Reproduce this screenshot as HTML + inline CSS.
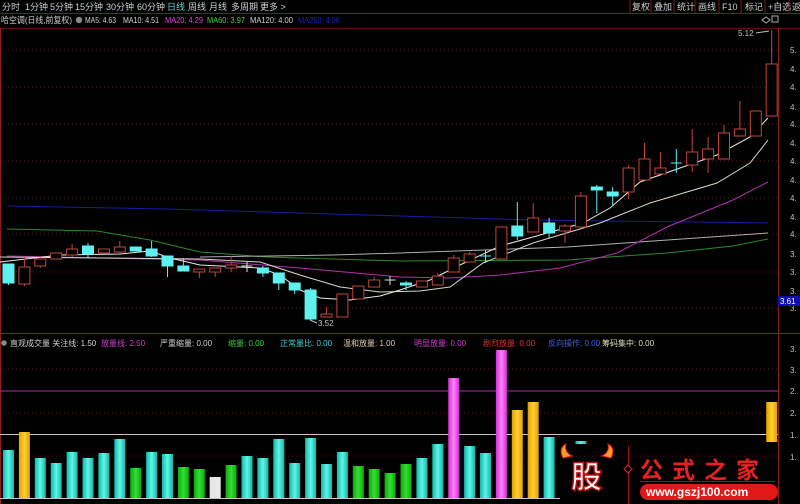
<!DOCTYPE html>
<html><head><meta charset="utf-8"><style>
html,body{margin:0;padding:0;background:#000;width:800px;height:504px;overflow:hidden}
svg{display:block}
text{font-family:"Liberation Sans","Noto Sans CJK SC",sans-serif}
</style></head><body>
<svg width="800" height="504" viewBox="0 0 800 504" xmlns="http://www.w3.org/2000/svg">
<defs>
<linearGradient id="gc" x1="0" x2="1"><stop offset="0" stop-color="#0fb8a8"/><stop offset=".5" stop-color="#5ff5e8"/><stop offset="1" stop-color="#0fb8a8"/></linearGradient>
<linearGradient id="gg" x1="0" x2="1"><stop offset="0" stop-color="#10a810"/><stop offset=".5" stop-color="#30e030"/><stop offset="1" stop-color="#10a810"/></linearGradient>
<linearGradient id="gy" x1="0" x2="1"><stop offset="0" stop-color="#e0a000"/><stop offset=".5" stop-color="#ffd030"/><stop offset="1" stop-color="#e0a000"/></linearGradient>
<linearGradient id="gm" x1="0" x2="1"><stop offset="0" stop-color="#d030d0"/><stop offset=".5" stop-color="#ff80ff"/><stop offset="1" stop-color="#d030d0"/></linearGradient>
</defs>
<g font-size="9" fill="#d0d0d0">
<text x="2" y="10">分时</text><text x="25" y="10">1分钟</text><text x="50" y="10">5分钟</text><text x="75" y="10">15分钟</text><text x="106" y="10">30分钟</text><text x="137" y="10">60分钟</text><text x="167" y="10" fill="#5fd8d0">日线</text><text x="188" y="10">周线</text><text x="209" y="10">月线</text><text x="231" y="10">多周期</text><text x="260" y="10">更多 &gt;</text>
</g>
<line x1="0" y1="13.5" x2="800" y2="13.5" stroke="#7a1a1a"/>
<g font-size="9" fill="#d0d0d0">
<text x="632" y="10">复权</text><text x="654" y="10">叠加</text><text x="677" y="10">统计</text><text x="698" y="10">画线</text><text x="722" y="10">F10</text><text x="745" y="10">标记</text><text x="768" y="10">+自选</text><text x="792" y="10">返</text>
</g>
<g stroke="#7a1a1a"><line x1="630" y1="0" x2="630" y2="13"/><line x1="651" y1="0" x2="651" y2="13"/><line x1="674" y1="0" x2="674" y2="13"/><line x1="695" y1="0" x2="695" y2="13"/><line x1="719" y1="0" x2="719" y2="13"/><line x1="741" y1="0" x2="741" y2="13"/><line x1="765" y1="0" x2="765" y2="13"/><line x1="789" y1="0" x2="789" y2="13"/></g>
<g font-size="8.5">
<text x="1" y="23" fill="#d0d0d0" textLength="71" lengthAdjust="spacingAndGlyphs">哈空调(日线,前复权)</text>
<circle cx="79" cy="20" r="3.2" fill="#888"/>
<text x="85" y="23" fill="#d0d0d0" textLength="31" lengthAdjust="spacingAndGlyphs">MA5: 4.63</text>
<text x="123" y="23" fill="#d0d0d0" textLength="36" lengthAdjust="spacingAndGlyphs">MA10: 4.51</text>
<text x="165" y="23" fill="#e040e0" textLength="38" lengthAdjust="spacingAndGlyphs">MA20: 4.29</text>
<text x="207" y="23" fill="#40d040" textLength="38" lengthAdjust="spacingAndGlyphs">MA60: 3.97</text>
<text x="250" y="23" fill="#d0d0d0" textLength="43" lengthAdjust="spacingAndGlyphs">MA120: 4.00</text>
<text x="298" y="23" fill="#2020c0" textLength="42" lengthAdjust="spacingAndGlyphs">MA250: 4.06</text>
</g>
<line x1="0" y1="28.5" x2="800" y2="28.5" stroke="#5a1010"/>
<g stroke="#5a1a1a" stroke-dasharray="1,3">
<line x1="0" y1="50" x2="778" y2="50"/><line x1="0" y1="87" x2="778" y2="87"/><line x1="0" y1="124" x2="778" y2="124"/><line x1="0" y1="161" x2="778" y2="161"/><line x1="0" y1="198" x2="778" y2="198"/><line x1="0" y1="234" x2="778" y2="234"/><line x1="0" y1="272" x2="778" y2="272"/><line x1="0" y1="308" x2="778" y2="308"/>
<line x1="0" y1="369" x2="778" y2="369"/><line x1="0" y1="413" x2="778" y2="413"/><line x1="0" y1="456" x2="778" y2="456"/>
</g>
<line x1="778.5" y1="28" x2="778.5" y2="504" stroke="#8a2020"/>
<line x1="0.5" y1="28" x2="0.5" y2="504" stroke="#8a2020"/>
<g font-size="8" fill="#c0c0c0">
<text x="790" y="53">5.</text><text x="790" y="72">4.</text><text x="790" y="90">4.</text><text x="790" y="110">4.</text><text x="790" y="127">4.</text><text x="790" y="146">4.</text><text x="790" y="164">4.</text><text x="790" y="183">4.</text><text x="790" y="201">4.</text><text x="790" y="220">4.</text><text x="790" y="237">4.</text><text x="790" y="257">3.</text><text x="790" y="275">3.</text><text x="790" y="294">3.</text><text x="790" y="311">3.</text>
</g>
<rect x="778" y="296" width="22" height="10" fill="#1010b0"/>
<text x="780" y="304" font-size="8" fill="#fff">3.61</text>
<g fill="none" stroke-width="1">
<polyline stroke="#1c1ca0" points="7,206 167,209 400,216 533,220 768,223"/>
<polyline stroke="#2a8a2a" points="7,229 97,231 150,240 200,252 267,257 400,261 567,260 667,253 733,246 768,239"/>
<polyline stroke="#b0b0b0" points="200,257 333,255 400,253 567,247 768,233"/>
<polyline stroke="#b030b0" points="7,256 200,260 300,268 400,277 450,278 500,275 560,268 617,253 667,227 733,200 768,182"/>
<polyline stroke="#d8d8c8" points="0,257 100,258 200,259 260,262 300,275 340,287 380,292 420,291 450,287 483,263 533,243 600,223 650,203 717,183 750,163 768,140"/>
<polyline stroke="#e8e8e0" points="0,262 60,255 120,254 150,251 170,258 200,265 260,268 280,275 300,290 320,298 350,300 380,296 400,290 430,280 460,265 500,246 533,237 583,223 610,208 640,182 683,167 717,155 750,137 768,118"/>
</g>
<g stroke="#c04840" fill="#000">
<line x1="24.4" y1="257" x2="24.4" y2="286"/><rect x="18.9" y="267" width="11" height="17"/>
<line x1="40.3" y1="257" x2="40.3" y2="268"/><rect x="34.8" y="259" width="11" height="7"/>
<rect x="50.7" y="253" width="11" height="6"/>
<line x1="72.1" y1="244" x2="72.1" y2="257"/><rect x="66.6" y="249" width="11" height="6"/>
<rect x="98.4" y="249" width="11" height="4"/>
<line x1="119.8" y1="241" x2="119.8" y2="253"/><rect x="114.3" y="247" width="11" height="5"/>
<line x1="199.3" y1="269" x2="199.3" y2="278"/><rect x="193.8" y="269" width="11" height="3"/>
<line x1="215.2" y1="268" x2="215.2" y2="277"/><rect x="209.7" y="268" width="11" height="4"/>
<line x1="231.1" y1="256" x2="231.1" y2="272"/><rect x="225.6" y="265" width="11" height="3"/>
<line x1="326.5" y1="307" x2="326.5" y2="317"/><rect x="321" y="314" width="11" height="3"/>
<rect x="336.9" y="294" width="11" height="23"/>
<rect x="352.8" y="286" width="11" height="13"/>
<line x1="374.2" y1="277" x2="374.2" y2="287"/><rect x="368.7" y="280" width="11" height="7"/>
<rect x="416.4" y="281" width="11" height="6"/>
<line x1="437.8" y1="273" x2="437.8" y2="285"/><rect x="432.3" y="276" width="11" height="9"/>
<line x1="453.7" y1="255" x2="453.7" y2="272"/><rect x="448.2" y="258" width="11" height="14"/>
<line x1="469.6" y1="252" x2="469.6" y2="262"/><rect x="464.1" y="254" width="11" height="8"/>
<rect x="495.9" y="227" width="11" height="32"/>
<line x1="533.2" y1="203" x2="533.2" y2="232"/><rect x="527.7" y="218" width="11" height="14"/>
<line x1="565" y1="224" x2="565" y2="243"/><rect x="559.5" y="226" width="11" height="5"/>
<line x1="580.9" y1="192" x2="580.9" y2="227"/><rect x="575.4" y="196" width="11" height="31"/>
<line x1="628.6" y1="165" x2="628.6" y2="199"/><rect x="623.1" y="168" width="11" height="24"/>
<line x1="644.5" y1="143" x2="644.5" y2="180"/><rect x="639" y="159" width="11" height="21"/>
<line x1="660.4" y1="152" x2="660.4" y2="174"/><rect x="654.9" y="168" width="11" height="6"/>
<line x1="692.2" y1="129" x2="692.2" y2="172"/><rect x="686.7" y="152" width="11" height="13"/>
<line x1="708.1" y1="137" x2="708.1" y2="173"/><rect x="702.6" y="149" width="11" height="10"/>
<line x1="724" y1="125" x2="724" y2="159"/><rect x="718.5" y="133" width="11" height="26"/>
<line x1="739.9" y1="101" x2="739.9" y2="136"/><rect x="734.4" y="129" width="11" height="7"/>
<rect x="750.3" y="111" width="11" height="25"/>
<line x1="771.7" y1="30" x2="771.7" y2="64"/><rect x="766.2" y="64" width="11" height="52"/>
</g>
<g stroke="#5ff0f0" fill="#5ff0f0">
<line x1="8.5" y1="264" x2="8.5" y2="285"/><rect x="3" y="264" width="11" height="19"/>
<line x1="88" y1="243" x2="88" y2="258"/><rect x="82.5" y="246" width="11" height="8"/>
<rect x="130.2" y="247" width="11" height="4"/>
<line x1="151.6" y1="241" x2="151.6" y2="257"/><rect x="146.1" y="249" width="11" height="7"/>
<line x1="167.5" y1="256" x2="167.5" y2="277"/><rect x="162" y="256" width="11" height="10"/>
<line x1="183.4" y1="258" x2="183.4" y2="271"/><rect x="177.9" y="266" width="11" height="5"/>
<line x1="262.9" y1="266" x2="262.9" y2="277"/><rect x="257.4" y="268" width="11" height="5"/>
<line x1="278.8" y1="273" x2="278.8" y2="290"/><rect x="273.3" y="273" width="11" height="10"/>
<line x1="294.7" y1="283" x2="294.7" y2="294"/><rect x="289.2" y="283" width="11" height="7"/>
<line x1="310.6" y1="288" x2="310.6" y2="320"/><rect x="305.1" y="290" width="11" height="29"/>
<line x1="406" y1="281" x2="406" y2="290"/><rect x="400.5" y="283" width="11" height="2"/>
<line x1="485.5" y1="250" x2="485.5" y2="263"/><line x1="480" y1="256" x2="491" y2="256"/>
<line x1="517.3" y1="202" x2="517.3" y2="240"/><rect x="511.8" y="226" width="11" height="10"/>
<line x1="549.1" y1="218" x2="549.1" y2="238"/><rect x="543.6" y="223" width="11" height="10"/>
<line x1="596.8" y1="185" x2="596.8" y2="213"/><rect x="591.3" y="187" width="11" height="3"/>
<line x1="612.7" y1="187" x2="612.7" y2="205"/><rect x="607.2" y="192" width="11" height="4"/>
<line x1="676.3" y1="149" x2="676.3" y2="173"/><line x1="670.8" y1="163" x2="681.8" y2="163"/>
</g>
<g stroke="#e0e0e0">
<line x1="247" y1="262" x2="247" y2="272"/><line x1="241.5" y1="266" x2="252.5" y2="266"/>
<line x1="390" y1="276" x2="390" y2="285"/><line x1="384.6" y1="280" x2="395.6" y2="280"/>
</g>
<text x="318" y="326" font-size="8" fill="#c0c0c0">3.52</text>
<line x1="310" y1="320" x2="317" y2="323" stroke="#c0c0c0"/>
<text x="738" y="36" font-size="8" fill="#c0c0c0">5.12</text>
<line x1="756" y1="33" x2="769" y2="31" stroke="#c0c0c0"/>
<path d="M762 20 L766 17 L770 20 L766 23Z" fill="none" stroke="#aaa"/>
<rect x="772" y="16" width="6" height="6" fill="none" stroke="#aaa"/>
<line x1="0" y1="333.5" x2="800" y2="333.5" stroke="#8a2020"/>
<g font-size="8">
<circle cx="4" cy="343" r="2.8" fill="#888"/>
<text x="10" y="346" fill="#d0d0d0">直观成交量 关注线: 1.50</text>
<text x="101" y="346" fill="#d040d0">放量线: 2.50</text>
<text x="160" y="346" fill="#d0d0d0">严重缩量: 0.00</text>
<text x="228" y="346" fill="#30d030">缩量: 0.00</text>
<text x="280" y="346" fill="#40d0d0">正常量比: 0.00</text>
<text x="343" y="346" fill="#e0d0b0">温和放量: 1.00</text>
<text x="414" y="346" fill="#d040d0">明显放量: 0.00</text>
<text x="483" y="346" fill="#e03030">剧烈放量: 0.00</text>
<text x="548" y="346" fill="#4060e0">反向操作: 0.00</text>
<text x="602" y="346" fill="#e0e0c0">筹码集中: 0.00</text>
</g>
<g font-size="8" fill="#c0c0c0">
<text x="790" y="352">3.</text><text x="790" y="373">3.</text><text x="790" y="394">2.</text><text x="790" y="416">2.</text><text x="790" y="438">1.</text><text x="790" y="460">1.</text>
</g>
<line x1="0" y1="391" x2="778" y2="391" stroke="#b030b0"/>
<line x1="0" y1="434.5" x2="778" y2="434.5" stroke="#c8c8c8"/>
<g>
<rect x="3" y="450" width="11" height="48" fill="url(#gc)"/>
<rect x="18.9" y="432" width="11" height="66" fill="url(#gy)"/>
<rect x="34.8" y="458" width="11" height="40" fill="url(#gc)"/>
<rect x="50.7" y="463" width="11" height="35" fill="url(#gc)"/>
<rect x="66.6" y="452" width="11" height="46" fill="url(#gc)"/>
<rect x="82.5" y="458" width="11" height="40" fill="url(#gc)"/>
<rect x="98.4" y="453" width="11" height="45" fill="url(#gc)"/>
<rect x="114.3" y="439" width="11" height="59" fill="url(#gc)"/>
<rect x="130.2" y="468" width="11" height="30" fill="url(#gg)"/>
<rect x="146.1" y="452" width="11" height="46" fill="url(#gc)"/>
<rect x="162" y="454" width="11" height="44" fill="url(#gc)"/>
<rect x="177.9" y="467" width="11" height="31" fill="url(#gg)"/>
<rect x="193.8" y="469" width="11" height="29" fill="url(#gg)"/>
<rect x="209.7" y="477" width="11" height="21" fill="#e8e8e8"/>
<rect x="225.6" y="465" width="11" height="33" fill="url(#gg)"/>
<rect x="241.5" y="456" width="11" height="42" fill="url(#gc)"/>
<rect x="257.4" y="458" width="11" height="40" fill="url(#gc)"/>
<rect x="273.3" y="439" width="11" height="59" fill="url(#gc)"/>
<rect x="289.2" y="463" width="11" height="35" fill="url(#gc)"/>
<rect x="305.1" y="438" width="11" height="60" fill="url(#gc)"/>
<rect x="321" y="464" width="11" height="34" fill="url(#gc)"/>
<rect x="336.9" y="452" width="11" height="46" fill="url(#gc)"/>
<rect x="352.8" y="466" width="11" height="32" fill="url(#gg)"/>
<rect x="368.7" y="469" width="11" height="29" fill="url(#gg)"/>
<rect x="384.6" y="473" width="11" height="25" fill="url(#gg)"/>
<rect x="400.5" y="464" width="11" height="34" fill="url(#gg)"/>
<rect x="416.4" y="458" width="11" height="40" fill="url(#gc)"/>
<rect x="432.3" y="444" width="11" height="54" fill="url(#gc)"/>
<rect x="448.2" y="378" width="11" height="120" fill="url(#gm)"/>
<rect x="464.1" y="446" width="11" height="52" fill="url(#gc)"/>
<rect x="480" y="453" width="11" height="45" fill="url(#gc)"/>
<rect x="495.9" y="350" width="11" height="148" fill="url(#gm)"/>
<rect x="511.8" y="410" width="11" height="88" fill="url(#gy)"/>
<rect x="527.7" y="402" width="11" height="96" fill="url(#gy)"/>
<rect x="543.6" y="437" width="11" height="61" fill="url(#gc)"/>
<rect x="575.4" y="441" width="11" height="3" fill="url(#gc)"/>
<rect x="766.2" y="402" width="11" height="40" fill="url(#gy)"/>
</g>
<line x1="0" y1="498.5" x2="560" y2="498.5" stroke="#c8c8c8"/>
<g>
<path d="M563 458 Q558 448 566 444 Q564 452 572 456Z" fill="#ff9a20" stroke="#e02020"/>
<path d="M611 458 Q616 448 608 444 Q610 452 602 456Z" fill="#ff9a20" stroke="#e02020"/>
<text x="571" y="488" font-size="31" font-weight="bold" fill="#fff" stroke="#c01010" stroke-width="1.5" font-family="'Noto Sans CJK SC',sans-serif">股</text>
<line x1="628.5" y1="446" x2="628.5" y2="504" stroke="#a01010"/>
<path d="M628 465 L632 469 L628 473 L624 469Z" fill="#000" stroke="#e02020"/>
<text x="640" y="478" font-size="23" font-weight="bold" fill="#e82020" letter-spacing="9" font-family="'Noto Serif CJK SC',serif">公式之家</text>
<line x1="640" y1="481.5" x2="775" y2="481.5" stroke="#a01010"/>
<rect x="640" y="484" width="138" height="16" rx="8" fill="#e01818"/>
<text x="646" y="496" font-size="12" font-weight="bold" fill="#fff">www.gszj100.com</text>
</g>
</svg>
</body></html>
